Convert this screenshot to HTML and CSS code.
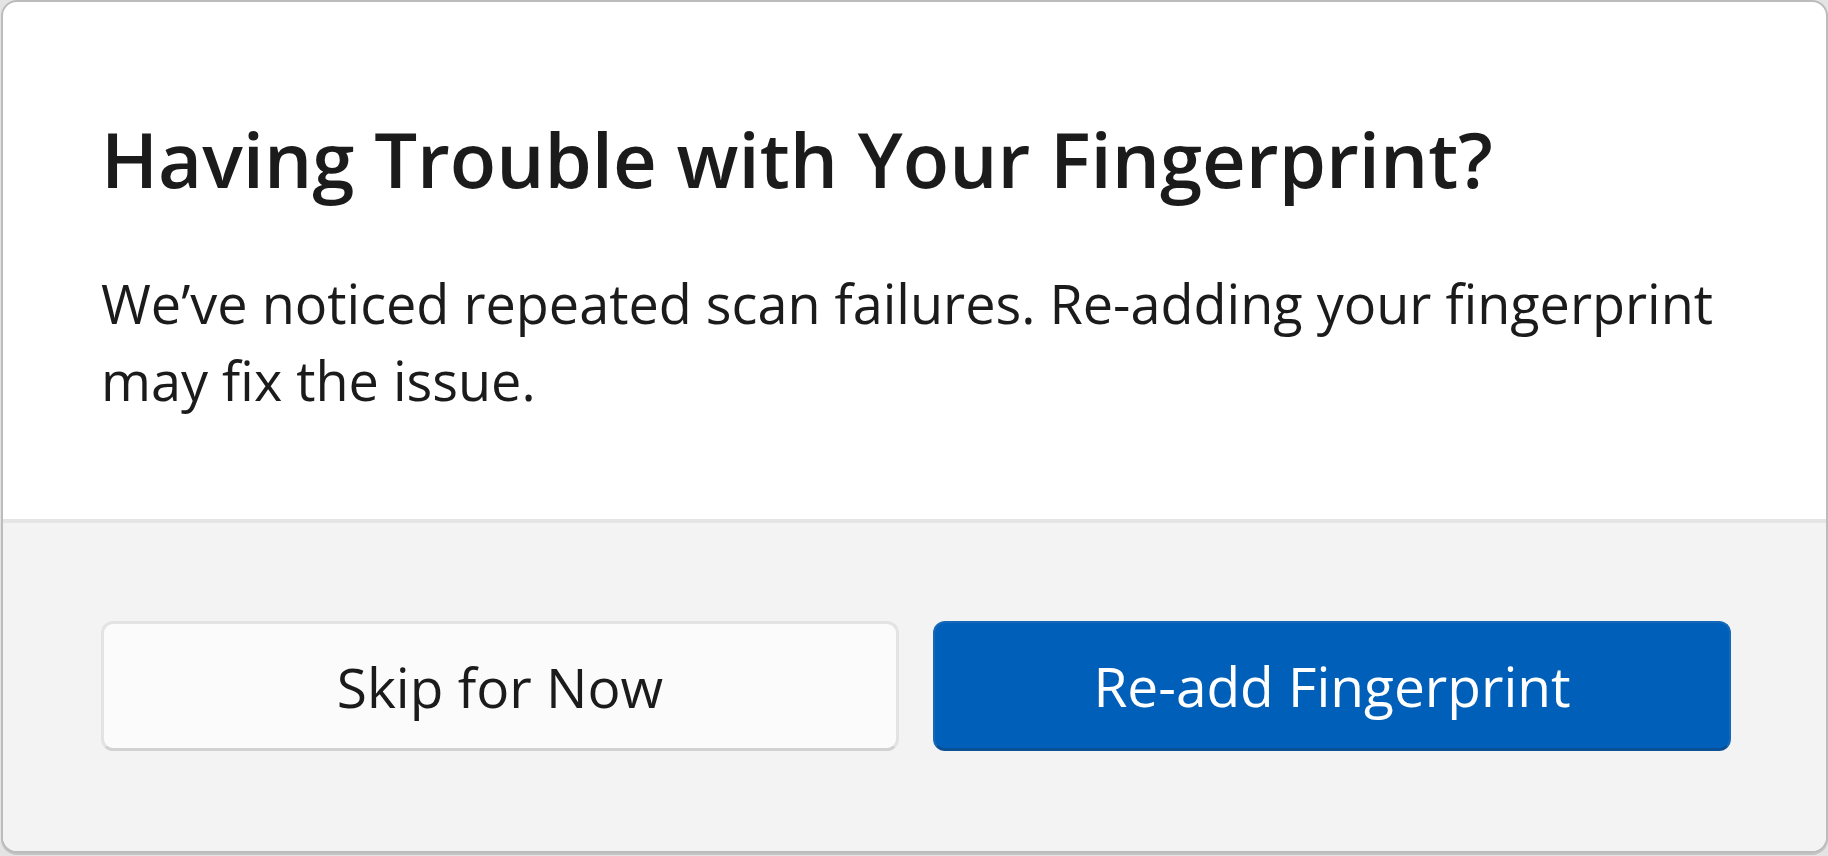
FILE: index.html
```html
<!DOCTYPE html>
<html lang="en">
<head>
<meta charset="utf-8">
<title>Having Trouble with Your Fingerprint?</title>
<link rel="stylesheet" href="styles.css">
</head>
<body>
<div class="dialog">
  <div class="content">
    <h1 class="title">Having Trouble with Your Fingerprint?</h1>
    <p class="message">We’ve noticed repeated scan failures. Re-adding your fingerprint may fix the issue.</p>
  </div>
  <div class="footer">
    <button class="btn btn-secondary">Skip for Now</button>
    <button class="btn btn-primary">Re-add Fingerprint</button>
  </div>
</div>
</body>
</html>
```
FILE: styles.css
```css
html, body {
  margin: 0;
  padding: 0;
  height: 100%;
}
body {
  background: #e4e4e4;
  font-family: "Open Sans", "Noto Sans", sans-serif;
  color: #1b1b1b;
}
.dialog {
  box-sizing: border-box;
  height: 853px;
  margin: 0 0 0 1px;
  border: 2px solid #bcbcbc;
  border-radius: 16px;
  background: #ffffff;
  box-shadow: 0 2px 0 #c4c4c4;
  overflow: hidden;
  display: flex;
  flex-direction: column;
}
.content {
  flex: 1;
  padding: 107px 40px 0 98px;
}
.title {
  margin: 0;
  font-size: 76px;
  font-weight: 600;
  line-height: 100px;
  letter-spacing: 0;
}
.message {
  margin: 56px 0 0 0;
  font-size: 54px;
  font-weight: 400;
  line-height: 77px;
}
.footer {
  background: #f3f3f3;
  border-top: 4px solid #e5e5e5;
  padding: 98px 95px 100px 98px;
  display: grid;
  grid-template-columns: 1fr 1fr;
  column-gap: 34px;
}
.btn {
  height: 130px;
  border-radius: 12px;
  font-family: inherit;
  font-size: 55px;
  font-weight: 400;
  padding: 0;
  cursor: pointer;
}
.btn-secondary {
  background: #fbfbfb;
  color: #1b1b1b;
  border: 3px solid #e3e3e3;
  border-bottom-color: #d2d2d2;
}
.btn-primary {
  background: #005fb8;
  color: #ffffff;
  border: 2px solid #1567b9;
  border-bottom: 3px solid #0b4f94;
}
```
